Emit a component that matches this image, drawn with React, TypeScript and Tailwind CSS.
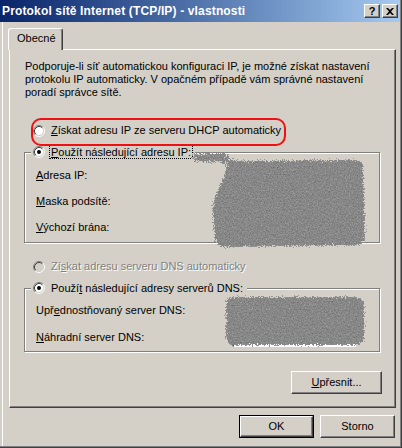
import React from "react";

const FONT = "[font-family:'Liberation_Sans',Arial,sans-serif]";

/* ===================== small win2k widgets ===================== */
function Radio({ checked = false, disabled = false }: { checked?: boolean; disabled?: boolean }) {
  return (
    <svg width="12" height="12" viewBox="0 0 12 12" className="shrink-0">
      <circle cx="6" cy="6" r="4.5" fill={disabled ? "#d4d0c8" : "#ffffff"} />
      <path d="M2.11 9.89A5.5 5.5 0 0 1 9.89 2.11" fill="none" stroke="#808080" />
      <path d="M9.89 2.11A5.5 5.5 0 0 1 2.11 9.89" fill="none" stroke="#ffffff" />
      <path d="M2.82 9.18A4.5 4.5 0 0 1 9.18 2.82" fill="none" stroke="#404040" />
      <path d="M9.18 2.82A4.5 4.5 0 0 1 2.82 9.18" fill="none" stroke="#d4d0c8" />
      {checked && <circle cx="6" cy="6" r="2" fill="#000000" />}
    </svg>
  );
}

function Bevel({ children }: { children: React.ReactNode }) {
  return (
    <div className="h-full w-full flex items-center justify-center border border-t-white border-l-white border-r-[#404040] border-b-[#404040] shadow-[inset_-1px_-1px_0_#808080]">
      {children}
    </div>
  );
}

function IpBox() {
  return (
    <div className="h-[20px] w-[124px] bg-white border border-t-[#808080] border-l-[#808080] border-r-white border-b-white shadow-[inset_1px_1px_0_#404040] flex items-center justify-around px-[20px] text-[11px]">
      <span>.</span>
      <span>.</span>
      <span>.</span>
    </div>
  );
}

// grey scribble used to hide the addresses
function Smudge({ id, shapes }: { id: string; shapes: React.ReactNode }) {
  return (
    <svg width="100%" height="100%">
      <defs>
        <filter id={id} x="-20%" y="-20%" width="140%" height="140%" colorInterpolationFilters="sRGB">
          <feGaussianBlur in="SourceAlpha" stdDeviation="4" result="blur" />
          <feTurbulence type="fractalNoise" baseFrequency="0.75" numOctaves="2" seed="7" result="noise" />
          <feColorMatrix in="noise" type="matrix" values="0 0 0 0 0  0 0 0 0 0  0 0 0 0 0  1 0 0 0 0" result="na" />
          <feComposite in="blur" in2="na" operator="arithmetic" k1="0" k2="1" k3="0.7" k4="-0.35" result="sum" />
          <feComponentTransfer in="sum" result="mask">
            <feFuncA type="discrete" tableValues="0 1" />
          </feComponentTransfer>
          <feColorMatrix in="noise" type="matrix" values="0.3 0 0 0 0.38  0.3 0 0 0 0.38  0.3 0 0 0 0.38  0 0 0 0 1" result="shade" />
          <feComposite in="shade" in2="mask" operator="in" />
        </filter>
      </defs>
      <g filter={`url(#${id})`} fill="#000">
        {shapes}
      </g>
    </svg>
  );
}

/* ===================== dialog ===================== */
export default function App() {
  return (
    <div className={`w-[402px] h-[448px] bg-[#d4d0c8] relative overflow-hidden text-black text-[11px] ${FONT}`}>
      <div className="h-full border-r border-b border-r-[#404040] border-b-[#404040]">
        <div className="h-full border-r border-b border-r-[#808080] border-b-[#808080] flex flex-col">
          {/* Title bar */}
          <div className="h-[22px] shrink-0 bg-linear-to-r from-[#0a246a] to-[#a6caf0] flex items-center justify-between pl-[2px] pr-[2px]">
            <span className="text-white font-bold text-[12px] tracking-[0.15px] whitespace-nowrap">
              Protokol sítě Internet (TCP/IP) - vlastnosti
            </span>
            <div className="flex gap-[2px]">
              <div className="w-[16px] h-[14px] bg-[#d4d0c8]">
                <Bevel>
                  <span className="font-bold text-[11px] leading-none">?</span>
                </Bevel>
              </div>
              <div className="w-[16px] h-[14px] bg-[#d4d0c8]">
                <Bevel>
                  <svg width="8" height="7" viewBox="0 0 8 7">
                    <path d="M0 0h2l2 2 2-2h2L5 3.5 8 7H6L4 5 2 7H0l3-3.5z" fill="#000" />
                  </svg>
                </Bevel>
              </div>
            </div>
          </div>

          {/* Client area */}
          <div className="flex-1 ml-[2px] border-l border-white">
            {/* Tab */}
            <div className="mt-[6px] pl-[5px]">
              <div className="relative z-10 -mb-[1px] w-[55px] h-[22px] bg-[#d4d0c8] rounded-t-[3px] border-t border-l border-r border-t-white border-l-white border-r-[#404040] shadow-[inset_-1px_0_0_#808080] pl-[8px] pt-[3px] leading-[13px]">
                Obecné
              </div>
            </div>

            {/* Panel */}
            <div className="ml-[6px] w-[387px] h-[359px] border border-t-white border-l-white border-r-[#404040] border-b-[#404040] shadow-[inset_-1px_-1px_0_#808080]">
              <p className="pt-[10px] pl-[15px] leading-[13px] whitespace-nowrap">
                Podporuje-li síť automatickou konfiguraci IP, je možné získat nastavení
                <br />
                protokolu IP automaticky. V opačném případě vám správné nastavení
                <br />
                poradí správce sítě.
              </p>

              <div className="relative mt-[25px] ml-[23px] h-[13px] w-fit flex items-center gap-[6px] leading-[13px]">
                <Radio />
                <span className="whitespace-nowrap">
                  <u>Z</u>ískat adresu IP ze serveru DHCP automaticky
                </span>
                <div className="absolute left-[-2px] top-[-6px] w-[255px] h-[28px] border-2 border-[#ee1111] rounded-[10px]" />
              </div>

              <fieldset className="mt-[8px] ml-[14px] w-[356px] border border-[#808080] shadow-[inset_1px_1px_0_#fff,1px_1px_0_#fff] pl-[11px] pb-[5px]">
                <legend className="ml-[-5px] px-[2px] bg-[#d4d0c8]">
                  <div className="flex items-center gap-[4px] h-[14px]">
                    <Radio checked />
                    <span className="border border-dotted border-black px-[1px] leading-[12px] whitespace-nowrap">
                      <u>P</u>oužít následující adresu IP:
                    </span>
                  </div>
                </legend>
                <div className="mt-[6px] flex flex-col gap-[6px]">
                  <div className="h-[20px] flex items-center">
                    <span className="w-[196px]">
                      <u>A</u>dresa IP:
                    </span>
                    <IpBox />
                  </div>
                  <div className="h-[20px] flex items-center">
                    <span className="w-[196px]">
                      <u>M</u>aska podsítě:
                    </span>
                    <IpBox />
                  </div>
                  <div className="h-[20px] flex items-center">
                    <span className="w-[196px]">
                      <u>V</u>ýchozí brána:
                    </span>
                    <IpBox />
                  </div>
                </div>
              </fieldset>

              <div className="mt-[17px] ml-[23px] h-[13px] flex items-center gap-[6px] leading-[13px]">
                <Radio disabled />
                <span className="whitespace-nowrap text-[#808080] [text-shadow:1px_1px_0_#fff]">
                  Zí<u>s</u>kat adresu serveru DNS automaticky
                </span>
              </div>

              <fieldset className="mt-[8px] ml-[14px] w-[356px] border border-[#808080] shadow-[inset_1px_1px_0_#fff,1px_1px_0_#fff] pl-[11px] pb-[4px]">
                <legend className="ml-[-5px] px-[2px] bg-[#d4d0c8]">
                  <div className="flex items-center gap-[4px] h-[14px]">
                    <Radio checked />
                    <span className="px-[2px] leading-[12px] whitespace-nowrap">
                      Použí<u>t</u> následující adresy serverů DNS:
                    </span>
                  </div>
                </legend>
                <div className="mt-[5px] flex flex-col gap-[7px]">
                  <div className="h-[20px] flex items-center">
                    <span className="w-[196px]">
                      Upř<u>e</u>dnostňovaný server DNS:
                    </span>
                    <IpBox />
                  </div>
                  <div className="h-[20px] flex items-center">
                    <span className="w-[196px]">
                      <u>N</u>áhradní server DNS:
                    </span>
                    <IpBox />
                  </div>
                </div>
              </fieldset>

              <div className="mt-[19px] ml-[281px] w-[91px] h-[23px]">
                <Bevel>
                  <span>
                    <u>U</u>přesnit...
                  </span>
                </Bevel>
              </div>
            </div>

            {/* Dialog buttons */}
            <div className="mt-[7px] ml-[236px] flex gap-[6px]">
              <div className="w-[75px] h-[23px] border border-black">
                <Bevel>OK</Bevel>
              </div>
              <div className="w-[75px] h-[23px]">
                <Bevel>Storno</Bevel>
              </div>
            </div>
          </div>
        </div>
      </div>

      {/* redaction scribbles */}
      <div className="absolute left-[180px] top-[145px] w-[195px] h-[112px] pointer-events-none">
        <Smudge
          id="smA"
          shapes={
            <>
              <path d="M50 16 L183 15 L185 100 L36 102 L32 60 Z" />
              <rect x="10" y="8" width="40" height="9" />
            </>
          }
        />
      </div>
      <div className="absolute left-[200px] top-[280px] w-[185px] h-[82px] pointer-events-none">
        <Smudge id="smB" shapes={<rect x="26" y="17" width="138" height="48" />} />
      </div>
    </div>
  );
}
